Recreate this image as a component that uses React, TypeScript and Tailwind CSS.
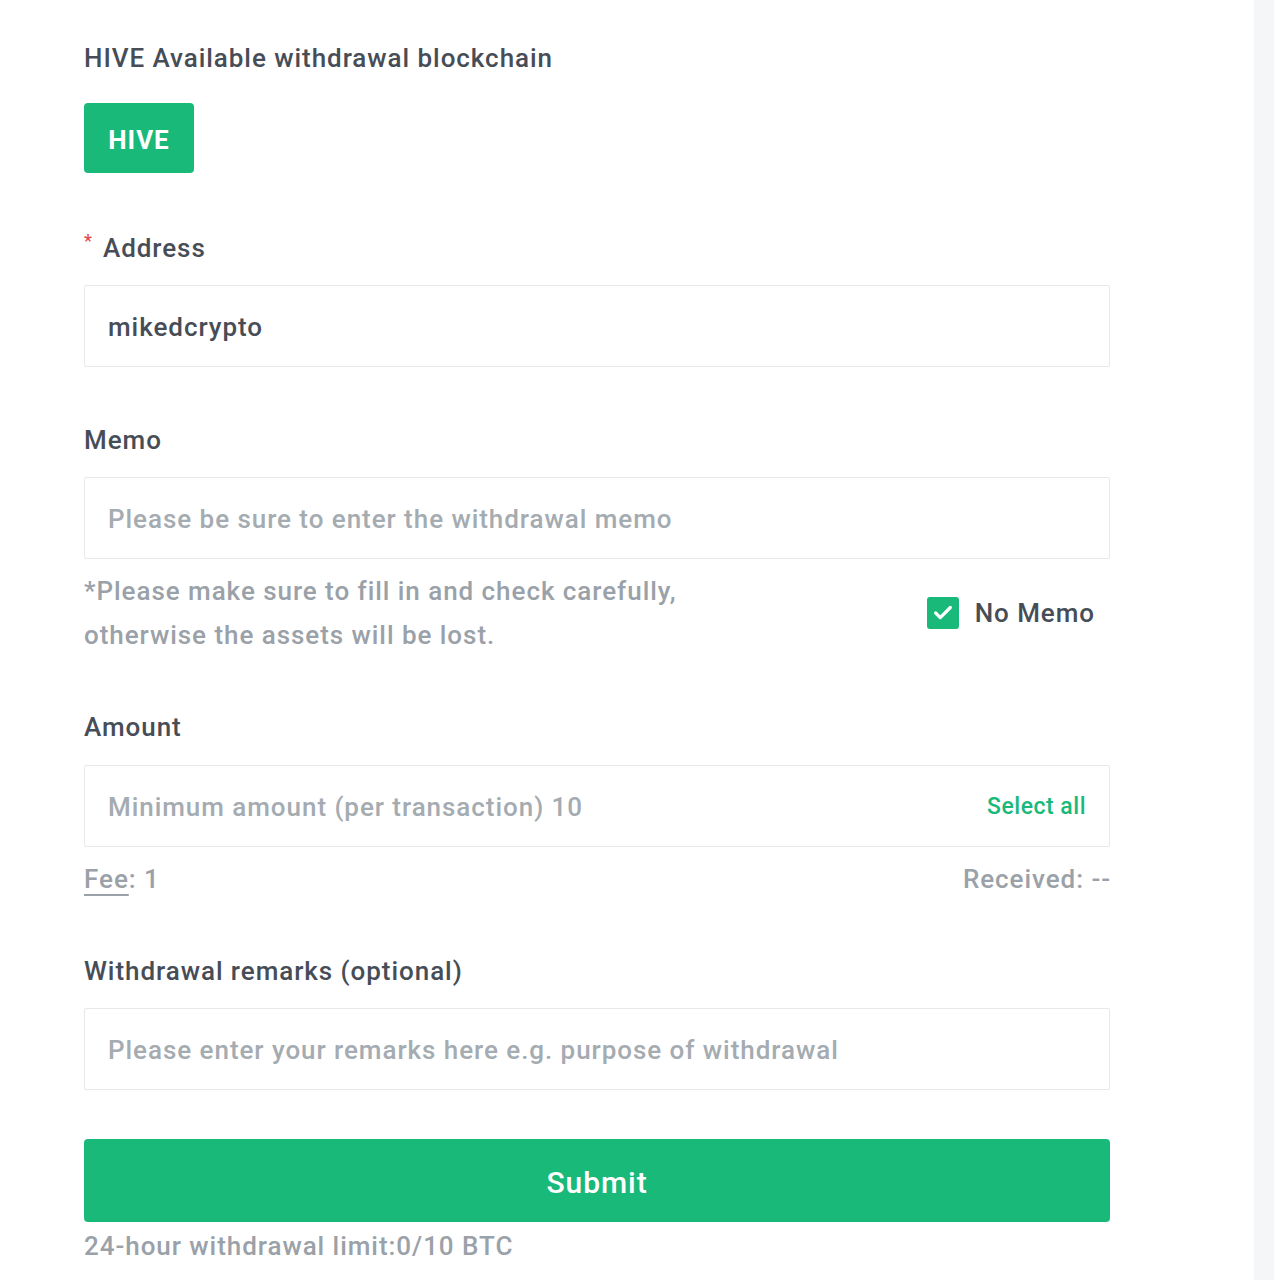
import { Check } from "lucide-react";

const font = { fontFamily: "Roboto, 'Noto Sans', sans-serif" };

function Field({ children }: { children: React.ReactNode }) {
  return (
    <div className="flex h-[82px] items-center rounded-[2px] border border-[#e6e8ea] bg-white pl-[23px] pr-[23px] pt-[3px] text-[26px]">
      {children}
    </div>
  );
}

export default function App() {
  return (
    <div className="flex min-h-[1280px] w-full bg-white tracking-[0.95px]" style={font}>
      <main className="flex-1 pl-[84px] pr-[144px] pt-[40px]">
        <div className="w-[1026px]">
          <h2 className="text-[26px] font-medium leading-[36px] text-[#474d57]">
            HIVE Available withdrawal blockchain
          </h2>
          <button className="mt-[27px] flex h-[70px] w-[110px] items-center justify-center rounded-[4px] bg-[#19b97a] pt-[4px] text-[26px] font-bold text-white">
            HIVE
          </button>

          <div className="mt-[57px] flex items-center text-[26px] font-medium leading-[36px] text-[#474d57]">
            <span className="mr-[10px] -mt-[14px] text-[18px] leading-none text-[#e5474f]">*</span>
            Address
          </div>
          <div className="mt-[19px]">
            <Field>
              <span className="font-medium text-[#474d57]">mikedcrypto</span>
            </Field>
          </div>

          <div className="mt-[55px] text-[26px] font-medium leading-[36px] text-[#474d57]">Memo</div>
          <div className="mt-[19px]">
            <Field>
              <span className="font-medium text-[#a4abb1]">Please be sure to enter the withdrawal memo</span>
            </Field>
          </div>
          <div className="mt-[10px] flex items-center justify-between">
            <p className="text-[26px] font-medium leading-[44px] text-[#9aa1a8]">
              *Please make sure to fill in and check carefully,
              <br />
              otherwise the assets will be lost.
            </p>
            <label className="flex items-center gap-[16px] pr-[15px]">
              <span className="flex h-[32px] w-[32px] items-center justify-center rounded-[3px] bg-[#19b97a]">
                <Check className="h-[22px] w-[22px] text-white" strokeWidth={3.5} />
              </span>
              <span className="text-[26px] font-medium text-[#474d57]">No Memo</span>
            </label>
          </div>

          <div className="mt-[52px] text-[26px] font-medium leading-[36px] text-[#474d57]">Amount</div>
          <div className="mt-[20px]">
            <Field>
              <span className="flex-1 font-medium text-[#a4abb1]">Minimum amount (per transaction) 10</span>
              <span className="text-[23px] font-medium tracking-[0.5px] text-[#19b97a]">Select all</span>
            </Field>
          </div>
          <div className="mt-[14px] flex justify-between text-[26px] font-medium leading-[36px] text-[#9aa1a8]">
            <span>
              <span className="underline decoration-[2px] underline-offset-[6px]">Fee</span>: 1
            </span>
            <span className="-mr-[1px]">Received: --</span>
          </div>

          <div className="mt-[56px] text-[26px] font-medium leading-[36px] text-[#474d57]">
            Withdrawal remarks (optional)
          </div>
          <div className="mt-[19px]">
            <Field>
              <span className="font-medium text-[#a4abb1]">Please enter your remarks here e.g. purpose of withdrawal</span>
            </Field>
          </div>

          <button className="mt-[49px] flex h-[83px] w-full items-center justify-center rounded-[4px] bg-[#19b97a] pt-[3px] text-[30px] font-medium text-white">
            Submit
          </button>
          <div className="mt-[6px] text-[26px] font-medium leading-[36px] text-[#9aa1a8]">
            24-hour withdrawal limit:0/10 BTC
          </div>
        </div>
      </main>
      <aside className="w-[20px] bg-[#f5f6f8]" />
    </div>
  );
}
